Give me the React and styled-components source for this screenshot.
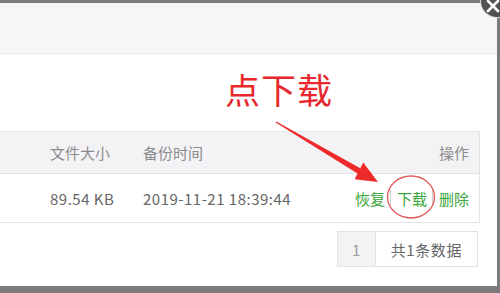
import React from "react";
import styled, { createGlobalStyle } from "styled-components";

const GlobalStyle = createGlobalStyle`
  html, body {
    margin: 0;
    padding: 0;
    background: #7b7b7b;
  }
  body {
    font-family: "Noto Sans CJK SC", "Noto Sans", sans-serif;
  }
`;

const Page = styled.div`
  position: relative;
  width: 500px;
  height: 293px;
  padding-top: 3px;
  box-sizing: border-box;
  overflow: hidden;
  background: #7b7b7b;
`;

const Modal = styled.div`
  position: relative;
  width: 497px;
  height: 283px;
  background: #ffffff;
`;

const ModalHeader = styled.div`
  height: 50px;
  background: #f6f6f6;
  border-bottom: 1px solid #e9e9e9;
`;

const CloseButton = styled.div`
  position: absolute;
  left: 481px;
  top: -18px;
  width: 32px;
  height: 32px;
  border-radius: 50%;
  background: #525252;
  box-shadow: 0 0 0 1px #dcdcdc;
  display: flex;
  align-items: center;
  justify-content: center;
  padding: 10px 8px 0 0;
  box-sizing: border-box;
`;

const Hint = styled.div`
  margin: 15px 0 0 225px;
  height: 62px;
  font-size: 35px;
  line-height: 40px;
  color: #e8282c;
  letter-spacing: 1px;
`;

const Table = styled.div`
  width: 480px;
  border: 1px solid #e4e4e4;
  border-left: none;
  box-sizing: border-box;
`;

const Row = styled.div`
  display: grid;
  grid-template-columns: 50px 93px 1fr auto;
  align-items: center;
  height: ${(p) => (p.$head ? "41px" : "48px")};
  padding-right: 10px;
  background: ${(p) => (p.$head ? "#f3f3f6" : "#ffffff")};
  border-top: ${(p) => (p.$head ? "none" : "1px solid #e4e4e4")};
  font-size: 15px;
  letter-spacing: ${(p) => (p.$head ? "0" : "0.5px")};
  color: ${(p) => (p.$head ? "#8c8c8c" : "#666666")};
`;

const Actions = styled.div`
  display: flex;
  align-items: center;
  letter-spacing: 0;
  color: #3aa63a;
`;

const Sep = styled.span`
  width: 1px;
  height: 16px;
  margin: 0 6px 0 5px;
  background: #cfcfcf;
`;

const Pager = styled.div`
  display: flex;
  justify-content: flex-end;
  margin: 8px 19px 0 0;
`;

const PagerBox = styled.div`
  display: flex;
  height: 34px;
  border: 1px solid #e2e2e2;
  font-size: 15px;
`;

const PageCell = styled.div`
  display: flex;
  align-items: center;
  justify-content: center;
  padding: 0 ${(p) => (p.$current ? "0" : "15px")};
  width: ${(p) => (p.$current ? "37px" : "auto")};
  background: ${(p) => (p.$current ? "#f3f3f3" : "#ffffff")};
  border-right: ${(p) => (p.$current ? "1px solid #e2e2e2" : "none")};
  letter-spacing: ${(p) => (p.$current ? "0" : "0.6px")};
  color: ${(p) => (p.$current ? "#9a9a9a" : "#666666")};
`;

const Marks = styled.svg`
  position: absolute;
  left: 0;
  top: 0;
  width: 500px;
  height: 293px;
  pointer-events: none;
`;

export default function App() {
  return (
    <>
      <GlobalStyle />
      <Page>
        <Modal>
          <ModalHeader />
          <CloseButton>
            <svg width="14" height="14" viewBox="0 0 14 14">
              <path
                d="M2 2 L12 12 M12 2 L2 12"
                stroke="#ffffff"
                strokeWidth="2.6"
                strokeLinecap="round"
              />
            </svg>
          </CloseButton>
          <Hint>点下载</Hint>
          <Table>
            <Row $head>
              <span />
              <span>文件大小</span>
              <span>备份时间</span>
              <span>操作</span>
            </Row>
            <Row>
              <span />
              <span>89.54 KB</span>
              <span>2019-11-21 18:39:44</span>
              <Actions>
                <span>恢复</span>
                <Sep />
                <span>下载</span>
                <Sep />
                <span>删除</span>
              </Actions>
            </Row>
          </Table>
          <Pager>
            <PagerBox>
              <PageCell $current>1</PageCell>
              <PageCell>共1条数据</PageCell>
            </PagerBox>
          </Pager>
        </Modal>
        <Marks viewBox="0 0 500 293">
          <polygon
            fill="#ee2a2a"
            points="276.3,121.6 360.3,168.2 363.2,162.6 378,182 354.6,179.2 357.5,173.6 275.7,122.4"
          />
          <ellipse
            cx="411"
            cy="197"
            rx="23.5"
            ry="21"
            fill="none"
            stroke="#e25a5a"
            strokeWidth="1.3"
          />
        </Marks>
      </Page>
    </>
  );
}
